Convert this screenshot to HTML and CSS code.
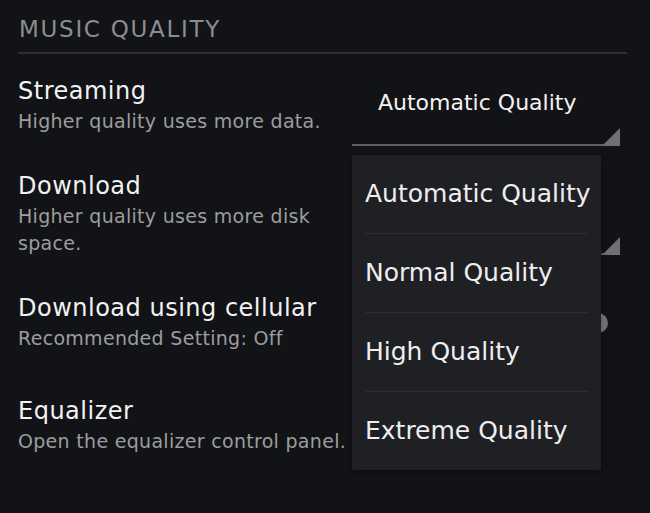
FILE: index.html
```html
<!DOCTYPE html>
<html>
<head>
    <title>Settings - Music Quality</title>
    <link rel="stylesheet" href="styles.css">
</head>
<body>
<div class="settings">
    <h2 class="section-title">Music Quality</h2>

    <div class="row">
        <div class="info">
            <div class="title">Streaming</div>
            <div class="desc">Higher quality uses more data.</div>
        </div>
        <div class="select">Automatic Quality</div>
    </div>

    <div class="row">
        <div class="info">
            <div class="title">Download</div>
            <div class="desc">Higher quality uses more disk space.</div>
        </div>
        <!-- value is hidden behind the open menu -->
        <div class="select">&nbsp;</div>
    </div>

    <div class="row row-tall">
        <div class="info">
            <div class="title">Download using cellular</div>
            <div class="desc">Recommended Setting: Off</div>
        </div>
        <div class="switch"><span class="knob"></span></div>
    </div>

    <div class="row">
        <div class="info">
            <div class="title">Equalizer</div>
            <div class="desc">Open the equalizer control panel.</div>
        </div>
    </div>

    <!-- open dropdown for Streaming -->
    <ul class="menu">
        <li>Automatic Quality</li>
        <li>Normal Quality</li>
        <li>High Quality</li>
        <li>Extreme Quality</li>
    </ul>
</div>
</body>
</html>
```

FILE: styles.css
```css
body {
    background-color: #121316;
    font-family: 'DejaVu Sans', sans-serif;
    color: #ececec;
    margin: 0;
}
.settings {
    position: relative;
    min-height: 513px;
    padding: 0 23px 0 18px;
}
.section-title {
    margin: 0;
    padding: 14px 0 8px 1px;
    font-size: 23px;
    line-height: 30px;
    font-weight: normal;
    letter-spacing: 1.7px;
    text-transform: uppercase;
    color: #8c8d8f;
    border-bottom: 2px solid #2e2f33;
}
.row {
    display: flex;
    align-items: center;
    padding: 19px 0 17px;
}
.section-title + .row {
    padding-top: 22px;
}
.row-tall {
    padding-bottom: 25px;
}
.info {
    width: 334px;
}
.title {
    font-size: 24px;
    line-height: 30px;
    letter-spacing: 0.5px;
    color: #f2f2f2;
    margin-bottom: 2px;
}
.desc {
    font-size: 19px;
    line-height: 27px;
    letter-spacing: 0.3px;
    color: #9c9d9f;
}
.select {
    position: relative;
    width: 242px;
    margin: 12px 7px -12px 0;
    padding: 0 0 27px 26px;
    font-size: 22px;
    line-height: 28px;
    white-space: nowrap;
    color: #f2f2f2;
    border-bottom: 2px solid #5e5f62;
}
.select::after {
    content: "";
    position: absolute;
    right: 0;
    bottom: -2px;
    border-left: 18px solid transparent;
    border-bottom: 18px solid #6f7073;
}
.switch {
    position: relative;
    width: 50px;
    height: 20px;
    margin-left: auto;
    margin-right: 19px;
}
.switch::before {
    content: "";
    position: absolute;
    left: 0;
    right: 10px;
    top: 3px;
    height: 14px;
    border-radius: 7px;
    background-color: #3a3b3f;
}
.knob {
    position: absolute;
    right: 0;
    top: 0;
    width: 20px;
    height: 20px;
    border-radius: 50%;
    background: linear-gradient(to right, #9a9b9d, #6c6d70);
}
.menu {
    position: absolute;
    left: 352px;
    top: 155px;
    width: 249px;
    margin: 0;
    padding: 0;
    list-style: none;
    background-color: #1f2024;
    box-shadow: 0 2px 6px rgba(0, 0, 0, 0.4);
}
.menu li {
    height: 78px;
    line-height: 78px;
    margin: 0 13px;
    font-size: 25px;
    white-space: nowrap;
    color: #eeeeee;
    border-top: 1px solid #2d2e32;
}
.menu li:first-child {
    border-top: none;
}
```
